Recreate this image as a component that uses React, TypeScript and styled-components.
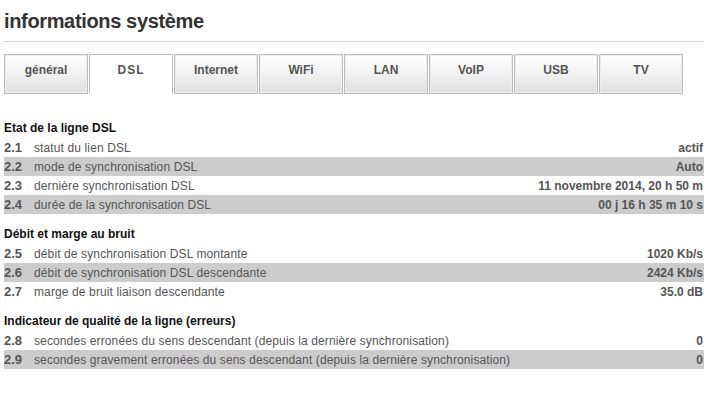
import React from "react";
import styled, { createGlobalStyle } from "styled-components";

const Global = createGlobalStyle`
  html, body { margin: 0; padding: 0; background: #fff; }
  body { font-family: Arial, "Liberation Sans", Helvetica, sans-serif; }
`;

const Page = styled.div`
  width: 700px;
  padding-left: 4px;
`;

const Title = styled.h1`
  margin: 0;
  padding: 9px 0 8px;
  font-size: 20px;
  line-height: 24px;
  font-weight: bold;
  letter-spacing: -0.35px;
  color: #333;
  border-bottom: 1px solid #d2d2d2;
`;

const TabBar = styled.div`
  display: flex;
  gap: 1px;
  margin-top: 12px;
`;

const Tab = styled.div<{ $active?: boolean }>`
  box-sizing: border-box;
  width: 84px;
  height: 40px;
  padding-top: 8px;
  text-align: center;
  font-size: 12px;
  line-height: 14px;
  font-weight: bold;
  color: #555;
  border: 1px solid #bdbdbd;
  border-bottom: ${(p) => (p.$active ? "1px solid #fff" : "1px solid #bdbdbd")};
  box-shadow: ${(p) => (p.$active ? "none" : "inset 0 0 0 1px #ececec")};
  background: ${(p) =>
    p.$active ? "#fff" : "linear-gradient(to bottom, #ffffff 0%, #f3f3f3 45%, #dedede 100%)"};
  letter-spacing: ${(p) => (p.$active ? "1px" : "0")};
`;

const Sections = styled.div`
  margin-top: 14px;
`;

const Section = styled.section``;

const SectionTitle = styled.h2`
  margin: 0;
  padding-top: 10px;
  font-size: 12px;
  line-height: 20px;
  font-weight: bold;
  color: #111;
`;

const Row = styled.div<{ $shaded?: boolean }>`
  display: flex;
  align-items: baseline;
  height: 19px;
  line-height: 19px;
  font-size: 12px;
  background: ${(p) => (p.$shaded ? "#cccccc" : "transparent")};
`;

const Num = styled.span`
  width: 30px;
  flex: none;
  font-weight: bold;
  font-size: 13px;
  color: #555;
`;

const Label = styled.span`
  flex: 1;
  color: #555;
  letter-spacing: 0.12px;
  white-space: nowrap;
`;

const Value = styled.span`
  font-weight: bold;
  color: #555;
  padding-right: 1px;
  white-space: nowrap;
`;

const tabs = ["général", "DSL", "Internet", "WiFi", "LAN", "VoIP", "USB", "TV"];

const data = [
  {
    title: "Etat de la ligne DSL",
    rows: [
      ["2.1", "statut du lien DSL", "actif"],
      ["2.2", "mode de synchronisation DSL", "Auto"],
      ["2.3", "dernière synchronisation DSL", "11 novembre 2014, 20 h 50 m"],
      ["2.4", "durée de la synchronisation DSL", "00 j 16 h 35 m 10 s"],
    ],
  },
  {
    title: "Débit et marge au bruit",
    rows: [
      ["2.5", "débit de synchronisation DSL montante", "1020 Kb/s"],
      ["2.6", "débit de synchronisation DSL descendante", "2424 Kb/s"],
      ["2.7", "marge de bruit liaison descendante", "35.0 dB"],
    ],
  },
  {
    title: "Indicateur de qualité de la ligne (erreurs)",
    rows: [
      ["2.8", "secondes erronées du sens descendant (depuis la dernière synchronisation)", "0"],
      ["2.9", "secondes gravement erronées du sens descendant (depuis la dernière synchronisation)", "0"],
    ],
  },
];

export default function App() {
  return (
    <Page>
      <Global />
      <Title>informations système</Title>
      <TabBar>
        {tabs.map((t) => (
          <Tab key={t} $active={t === "DSL"}>
            {t}
          </Tab>
        ))}
      </TabBar>
      <Sections>
        {data.map((s) => (
          <Section key={s.title}>
            <SectionTitle>{s.title}</SectionTitle>
            {s.rows.map(([n, l, v], i) => (
              <Row key={n} $shaded={i % 2 === 1}>
                <Num>{n}</Num>
                <Label>{l}</Label>
                <Value>{v}</Value>
              </Row>
            ))}
          </Section>
        ))}
      </Sections>
    </Page>
  );
}
